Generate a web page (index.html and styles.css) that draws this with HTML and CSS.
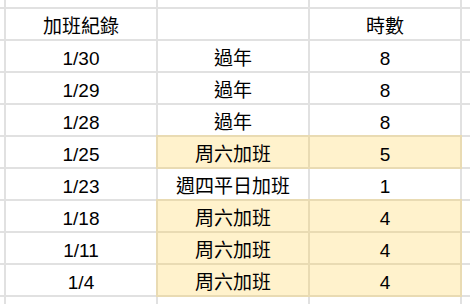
FILE: index.html
```html
<!DOCTYPE html>
<html lang="zh-Hant">
<head>
<meta charset="utf-8">
<link rel="stylesheet" href="styles.css">
</head>
<body>
<div class="sheet">
  <div class="c"></div><div class="c"></div><div class="c"></div><div class="c"></div><div class="c"></div>

  <div class="c"></div><div class="c">加班紀錄</div><div class="c"></div><div class="c">時數</div><div class="c"></div>

  <div class="c"></div><div class="c">1/30</div><div class="c">過年</div><div class="c">8</div><div class="c"></div>
  <div class="c"></div><div class="c">1/29</div><div class="c">過年</div><div class="c">8</div><div class="c"></div>
  <div class="c"></div><div class="c">1/28</div><div class="c">過年</div><div class="c">8</div><div class="c"></div>
  <div class="c"></div><div class="c">1/25</div><div class="c hl">周六加班</div><div class="c hl">5</div><div class="c"></div>
  <div class="c"></div><div class="c">1/23</div><div class="c">週四平日加班</div><div class="c">1</div><div class="c"></div>
  <div class="c"></div><div class="c">1/18</div><div class="c hl">周六加班</div><div class="c hl">4</div><div class="c"></div>
  <div class="c"></div><div class="c">1/11</div><div class="c hl">周六加班</div><div class="c hl">4</div><div class="c"></div>
  <div class="c"></div><div class="c">1/4</div><div class="c hl">周六加班</div><div class="c hl">4</div><div class="c"></div>

  <div class="c"></div><div class="c"></div><div class="c"></div><div class="c"></div><div class="c"></div>
</div>
</body>
</html>
```
FILE: styles.css
```css
html, body {
  margin: 0;
  padding: 0;
  background: #ffffff;
}
.sheet {
  width: 470px;
  height: 304px;
  overflow: hidden;
  display: grid;
  grid-template-columns: 4px 150px 150px 150px 1fr;
  grid-template-rows: 7px repeat(9, 30px) 1fr;
  gap: 2px;
  background: #e1e1e1;
  font-family: "Liberation Sans", "Noto Sans CJK TC", sans-serif;
  font-size: 19px;
  color: #000000;
}
.c {
  background: #ffffff;
  display: flex;
  align-items: center;
  justify-content: center;
  line-height: 19px;
  padding-top: 4px;
  box-sizing: border-box;
  white-space: nowrap;
  overflow: visible;
}
.hl {
  background: #fff2cc;
  box-shadow: 0 0 0 2px #e9dbb3;
}
```
